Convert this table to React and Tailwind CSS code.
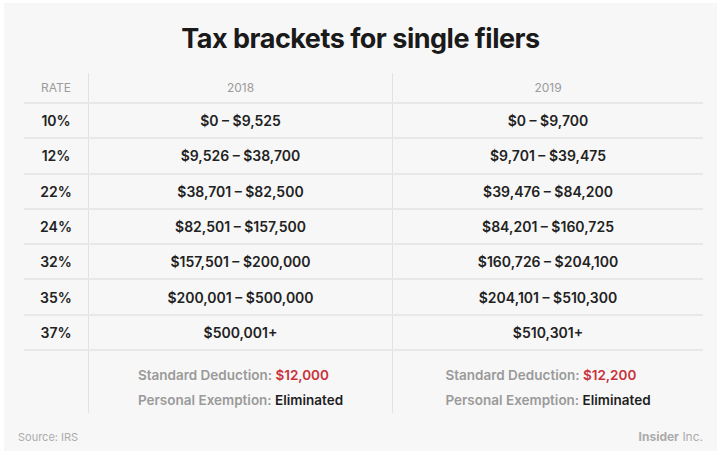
import React from "react";

const rows = [
  ["10%", "$0 – $9,525", "$0 – $9,700"],
  ["12%", "$9,526 – $38,700", "$9,701 – $39,475"],
  ["22%", "$38,701 – $82,500", "$39,476 – $84,200"],
  ["24%", "$82,501 – $157,500", "$84,201 – $160,725"],
  ["32%", "$157,501 – $200,000", "$160,726 – $204,100"],
  ["35%", "$200,001 – $500,000", "$204,101 – $510,300"],
  ["37%", "$500,001+", "$510,301+"],
];

function Deduction({ amount }) {
  return (
    <div className="inline-flex flex-col text-left text-[13.5px] font-semibold leading-[25px]">
      <div>
        <span className="text-[#9a9a9a]">Standard Deduction: </span>
        <span className="text-[#c8323b]">{amount}</span>
      </div>
      <div>
        <span className="text-[#9a9a9a]">Personal Exemption: </span>
        <span className="text-[#1e1e1e]">Eliminated</span>
      </div>
    </div>
  );
}

export default function App() {
  return (
    <div className="w-[720px] h-[456px] bg-white pt-[3px] pl-[4px] font-['Inter',sans-serif]">
      <div className="w-[713px] h-[448px] bg-[#f7f7f7] flex flex-col">
        {/* TITLE */}
        <h1 className="text-center text-[27px] font-bold tracking-[-0.5px] text-[#1a1a1a] pt-[16px] h-[70px]">
          Tax brackets for single filers
        </h1>

        {/* TABLE */}
        <div className="ml-[20px] w-[679px]">
          <div className="grid grid-cols-[64px_304px_311px] h-[31px] border-b-2 border-[#e8e8e8] text-[12px] text-[#9b9b9b] items-center">
            <div className="text-center">RATE</div>
            <div className="text-center border-l border-[#e2e2e2] h-full flex items-center justify-center">2018</div>
            <div className="text-center border-l border-[#e2e2e2] h-full flex items-center justify-center">2019</div>
          </div>

          {rows.map(([rate, a, b]) => (
            <div
              key={rate}
              className="grid grid-cols-[64px_304px_311px] h-[35.3px] border-b-2 border-[#e8e8e8] text-[14px] font-semibold text-[#222]"
            >
              <div className="flex items-center justify-center">{rate}</div>
              <div className="flex items-center justify-center border-l border-[#e2e2e2]">{a}</div>
              <div className="flex items-center justify-center border-l border-[#e2e2e2]">{b}</div>
            </div>
          ))}

          <div className="grid grid-cols-[64px_304px_311px] h-[62px]">
            <div />
            <div className="flex justify-center pt-[12px] border-l border-[#e2e2e2]">
              <Deduction amount="$12,000" />
            </div>
            <div className="flex justify-center pt-[12px] border-l border-[#e2e2e2]">
              <Deduction amount="$12,200" />
            </div>
          </div>
        </div>

        {/* FOOTER */}
        <div className="flex justify-between items-center px-[14px] mt-[15px] text-[11px] text-[#ababab]">
          <span>Source: IRS</span>
          <span className="text-[12px]">
            <span className="font-bold">Insider</span> Inc.
          </span>
        </div>
      </div>
    </div>
  );
}
